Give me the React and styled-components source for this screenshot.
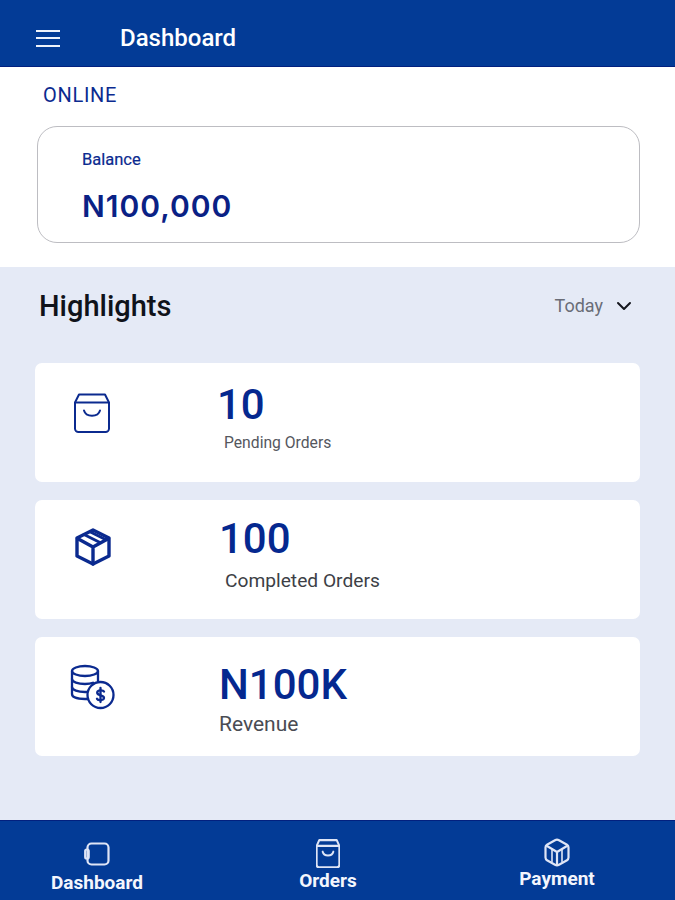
import styled, { createGlobalStyle } from 'styled-components';

const GlobalStyle = createGlobalStyle`
  html, body {
    margin: 0;
    padding: 0;
    background: #ffffff;
    font-family: Roboto, "Liberation Sans", sans-serif;
  }
`;

const Page = styled.div`
  width: 675px;
  height: 900px;
  display: flex;
  flex-direction: column;
  overflow: hidden;
`;

const Header = styled.header`
  height: 67px;
  flex: none;
  box-sizing: border-box;
  display: flex;
  align-items: center;
  padding: 10px 0 0 36px;
  background: #033b96;
  border-bottom: 1px solid #02207f;
`;

const MenuButton = styled.div`
  width: 24px;
  height: 17px;
  display: flex;
  flex-direction: column;
  justify-content: space-between;
  margin-right: 60px;

  span {
    display: block;
    height: 2px;
    background: #eef2fb;
  }
`;

const HeaderTitle = styled.h1`
  margin: 0;
  color: #ffffff;
  font-size: 24px;
  line-height: 28px;
  font-weight: 500;
`;

const OnlineSection = styled.section`
  height: 200px;
  flex: none;
  box-sizing: border-box;
  padding: 16px 35px 0 37px;
  background: #ffffff;
`;

const OnlineLabel = styled.div`
  margin-left: 6px;
  color: #0b2a8f;
  font-size: 20px;
  line-height: 24px;
  letter-spacing: 0.7px;
`;

const BalanceCard = styled.div`
  height: 117px;
  margin-top: 19px;
  box-sizing: border-box;
  padding: 23px 0 0 44px;
  border: 1px solid #bdbdc2;
  border-radius: 20px;
`;

const BalanceLabel = styled.div`
  color: #0b2a8f;
  font-size: 16.5px;
  line-height: 20px;
  font-weight: 400;
  -webkit-text-stroke: 0.2px #0b2a8f;
`;

const BalanceValue = styled.div`
  margin-top: 18px;
  color: #0a2185;
  font-family: Inter, "Liberation Sans", sans-serif;
  font-size: 30px;
  line-height: 36px;
  font-weight: 600;
  letter-spacing: 1px;
`;

const Highlights = styled.section`
  flex: 1;
  box-sizing: border-box;
  padding: 0 35px;
  background: #e5eaf6;
`;

const HighlightsHead = styled.div`
  height: 78px;
  display: flex;
  align-items: center;
  justify-content: space-between;
  padding: 0 8px 0 4px;
  margin-bottom: 18px;
`;

const HighlightsTitle = styled.h2`
  margin: 0;
  color: #10131a;
  font-size: 29px;
  line-height: 34px;
  font-weight: 500;
`;

const RangePicker = styled.div`
  display: flex;
  align-items: center;
  gap: 13px;
  color: #6a6d77;
  font-size: 18px;
  line-height: 22px;
`;

const CardList = styled.div`
  display: flex;
  flex-direction: column;
  gap: 18px;
`;

const StatCard = styled.div`
  height: 119px;
  display: flex;
  box-sizing: border-box;
  background: #ffffff;
  border-radius: 7px;
`;

const IconSlot = styled.div`
  width: 184px;
  flex: none;
  box-sizing: border-box;
  padding-left: ${(p) => p.$left}px;
  padding-top: ${(p) => p.$top}px;
  color: #0b2a8f;
`;

const StatText = styled.div`
  padding-top: ${(p) => p.$top}px;
`;

const StatValue = styled.div`
  color: #05288f;
  font-size: ${(p) => p.$size}px;
  line-height: 46px;
  font-weight: 500;
  margin-left: ${(p) => p.$indent}px;
`;

const StatLabel = styled.div`
  color: ${(p) => p.$color};
  font-size: ${(p) => p.$size}px;
  line-height: 22px;
  margin-top: ${(p) => p.$gap}px;
  margin-left: ${(p) => p.$indent}px;
`;

const BottomNav = styled.nav`
  height: 80px;
  flex: none;
  display: flex;
  box-sizing: border-box;
  background: #033b96;
  border-top: 1px solid #02207f;
`;

const NavItem = styled.div`
  width: ${(p) => p.$width}px;
  flex: none;
  display: flex;
  flex-direction: column;
  align-items: center;
  gap: ${(p) => p.$gap}px;
  padding-top: ${(p) => p.$top}px;
  box-sizing: border-box;
  color: #dfe5f6;
`;

const NavLabel = styled.span`
  color: #f4f6fd;
  font-size: 19px;
  line-height: 22px;
  font-weight: 700;
`;

const BagIcon = ({ width = 36, height = 40, strokeWidth = 2 }) => (
  <svg
    width={width}
    height={height}
    viewBox="0 0 36 40"
    preserveAspectRatio="none"
    fill="none"
    stroke="currentColor"
    strokeWidth={strokeWidth}
    strokeLinejoin="round"
    strokeLinecap="round"
  >
    <path d="M1 9.500 5 1.500h26l4 8v26a3.500 3.500 0 0 1-3.500 3.500h-27A3.500 3.500 0 0 1 1 35.500z" />
    <path d="M1.500 9.500h33" />
    <path d="M10 17.500c2 7 14 7 16 0" />
  </svg>
);

const BoxIcon = () => (
  <svg width="36" height="38" viewBox="0 0 36 38" fill="none" stroke="currentColor" strokeWidth="3.400" strokeLinejoin="round" strokeLinecap="round">
    <path d="M18 2 34 10v18l-16 8-16-8V10z" />
    <path d="M2.500 10.500 18 19l15.500-8.500M18 19v17" />
    <path d="m9 6.500 16 8M15 3.800l16 8" strokeWidth="2.800" />
  </svg>
);

const CoinsIcon = () => (
  <svg width="46" height="46" viewBox="0 0 46 46" fill="none" stroke="currentColor" strokeWidth="2.300" strokeLinecap="round" strokeLinejoin="round">
    <ellipse cx="15" cy="7" rx="13" ry="5" />
    <path d="M2 7v23c0 3 5 5 13 5h3" />
    <path d="M28 7v10" />
    <path d="M2 15c0 3 6 5 13 5 3 0 6-.4 8-1.200" />
    <path d="M2 23c0 3 6 5 13 5h2" />
    <circle cx="30.500" cy="31" r="13" />
    <path d="M34 27.500c-.8-1.500-6.500-2-6.800 1-.3 3.500 7 2.300 6.800 5.500-.2 2.600-5.800 2.700-7 .8" />
    <path d="M30.500 24v14" />
  </svg>
);

const NotebookIcon = () => (
  <svg width="26" height="24" viewBox="0 0 26 24" fill="none" stroke="currentColor" strokeWidth="2.200" strokeLinejoin="round">
    <rect x="3.500" y="1.500" width="21" height="21" rx="4" />
    <rect x="1.200" y="7.500" width="3.500" height="9" rx="1.500" />
  </svg>
);

const CubeIcon = () => (
  <svg width="26" height="29" viewBox="0 0 26 29" fill="none" stroke="currentColor" strokeWidth="2.200" strokeLinejoin="round" strokeLinecap="round">
    <path d="M11 2.200a4 4 0 0 1 4 0l8 4.600a3 3 0 0 1 1.500 2.600v10.200a3 3 0 0 1-1.500 2.600l-8 4.600a4 4 0 0 1-4 0l-8-4.600a3 3 0 0 1-1.500-2.600V9.400A3 3 0 0 1 3 6.800z" />
    <path d="M3 8l10 6 10-6M13 14v13" />
    <path d="M8 11v12.500M18 11v12.500" strokeWidth="1.600" />
  </svg>
);

const Chevron = () => (
  <svg width="16" height="10" viewBox="0 0 16 10" fill="none" stroke="#15171e" strokeWidth="2" strokeLinecap="round" strokeLinejoin="round">
    <path d="M2 2l6 6 6-6" />
  </svg>
);

const stats = [
  {
    icon: <BagIcon />,
    iconLeft: 39,
    iconTop: 30,
    textTop: 19,
    value: '10',
    valueSize: 42,
    valueIndent: -2,
    label: 'Pending Orders',
    labelSize: 15.700,
    labelColor: '#55575e',
    labelGap: 4,
    labelIndent: 5,
  },
  {
    icon: <BoxIcon />,
    iconLeft: 40,
    iconTop: 28,
    textTop: 16,
    value: '100',
    valueSize: 42,
    valueIndent: 0,
    label: 'Completed Orders',
    labelSize: 19.200,
    labelColor: '#3d3f46',
    labelGap: 8,
    labelIndent: 6,
  },
  {
    icon: <CoinsIcon />,
    iconLeft: 35,
    iconTop: 27,
    textTop: 25,
    value: 'N100K',
    valueSize: 42,
    valueIndent: 0,
    label: 'Revenue',
    labelSize: 21,
    labelColor: '#4a4c53',
    labelGap: 5,
    labelIndent: 0,
  },
];

const App = () => {
  return (
    <Page>
      <GlobalStyle />
      <Header>
        <MenuButton>
          <span />
          <span />
          <span />
        </MenuButton>
        <HeaderTitle>Dashboard</HeaderTitle>
      </Header>

      <OnlineSection>
        <OnlineLabel>ONLINE</OnlineLabel>
        <BalanceCard>
          <BalanceLabel>Balance</BalanceLabel>
          <BalanceValue>N100,000</BalanceValue>
        </BalanceCard>
      </OnlineSection>

      <Highlights>
        <HighlightsHead>
          <HighlightsTitle>Highlights</HighlightsTitle>
          <RangePicker>
            Today
            <Chevron />
          </RangePicker>
        </HighlightsHead>
        <CardList>
          {stats.map((item) => (
            <StatCard key={item.label}>
              <IconSlot $left={item.iconLeft} $top={item.iconTop}>
                {item.icon}
              </IconSlot>
              <StatText $top={item.textTop}>
                <StatValue $size={item.valueSize} $indent={item.valueIndent}>
                  {item.value}
                </StatValue>
                <StatLabel
                  $size={item.labelSize}
                  $color={item.labelColor}
                  $gap={item.labelGap}
                  $indent={item.labelIndent}
                >
                  {item.label}
                </StatLabel>
              </StatText>
            </StatCard>
          ))}
        </CardList>
      </Highlights>

      <BottomNav>
        <NavItem $width={194} $top={21} $gap={6}>
          <NotebookIcon />
          <NavLabel>Dashboard</NavLabel>
        </NavItem>
        <NavItem $width={268} $top={18} $gap={2}>
          <BagIcon width={24} height={29} strokeWidth={3} />
          <NavLabel>Orders</NavLabel>
        </NavItem>
        <NavItem $width={190} $top={17} $gap={1}>
          <CubeIcon />
          <NavLabel>Payment</NavLabel>
        </NavItem>
      </BottomNav>
    </Page>
  );
};

export default App;
